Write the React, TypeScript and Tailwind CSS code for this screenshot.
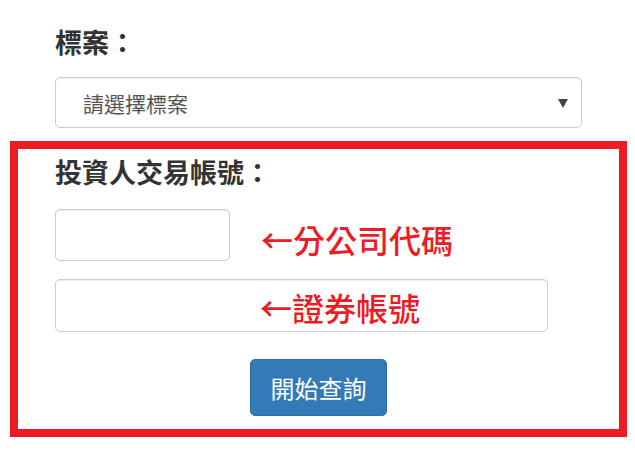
const font = "font-['Noto_Sans_CJK_TC','Noto_Sans_CJK_JP',sans-serif]"

const App = () => {
    return (
        <div className={`w-[635px] h-[452px] bg-white overflow-hidden ${font}`}>
            {/* 標案 */}
            <div className="pl-[55px] pt-[27px]">
                <div className="text-[27px] leading-[30px] font-bold text-[#333]">標案：</div>
                <div className="mt-[20px] w-[527px] h-[51px] flex items-center justify-between pl-[27px] pr-[13px] border border-[#ccc] rounded-[5px] bg-white shadow-[inset_0_1px_1px_rgba(0,0,0,0.075)]">
                    <span className="text-[21px] leading-[24px] text-[#555]">請選擇標案</span>
                    <svg width="10" height="10" viewBox="0 0 10 10">
                        <polygon points="0,1 10,1 5,10" fill="#444" />
                    </svg>
                </div>
            </div>

            {/* 投資人交易帳號 */}
            <div className="mt-[13px] ml-[10px] w-[617px] h-[296px] border-[8px] border-[#ed1c24] pl-[37px] pt-[8px]">
                <div className="text-[27px] leading-[30px] font-bold text-[#333]">投資人交易帳號：</div>
                <div className="mt-[22px] flex items-center">
                    <div className="w-[175px] h-[52px] border border-[#ccc] rounded-[5px] shadow-[inset_0_1px_1px_rgba(0,0,0,0.075)]"></div>
                    <span className="ml-[31px] pt-[7px] text-[32px] leading-[34px] font-medium text-[#ed1c24]">←分公司代碼</span>
                </div>
                <div className="relative mt-[18px] w-[493px] h-[53px] border border-[#ccc] rounded-[5px] shadow-[inset_0_1px_1px_rgba(0,0,0,0.075)]">
                    <span className="absolute left-[204px] top-[10px] text-[32px] leading-[34px] font-medium text-[#ed1c24] whitespace-nowrap">←證券帳號</span>
                </div>
                <div className="mt-[27px] flex justify-center pr-[37px]">
                    <button className="w-[137px] h-[57px] rounded-[5px] bg-[#337ab7] border border-[#2e6da4] text-white text-[24px] leading-[28px]">
                        開始查詢
                    </button>
                </div>
            </div>
        </div>
    )
}

export default App;
